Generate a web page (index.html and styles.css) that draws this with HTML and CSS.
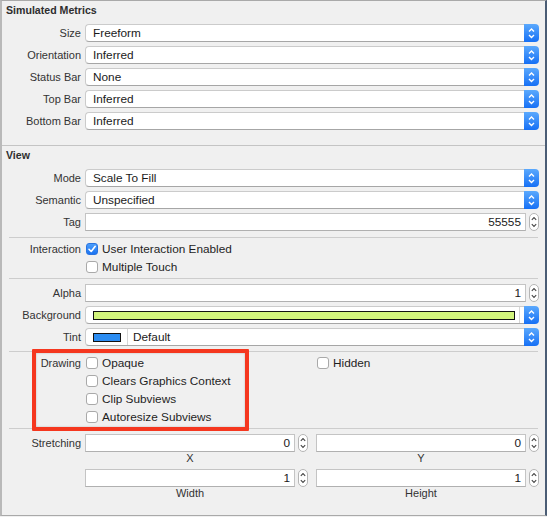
FILE: index.html
```html
<!DOCTYPE html>
<html>
<head>
<meta charset="utf-8">
<link rel="stylesheet" href="styles.css">
</head>
<body>
<div class="panel">
  <section class="sec">
    <div class="sec-title">Simulated Metrics</div>
    <div class="rows">
      <div class="row"><span class="lbl">Size</span><div class="popup"><span class="val">Freeform</span><span class="arrow"><svg viewBox="0 0 15 18" width="15" height="18"><path d="M5 7.5 L7.5 5 L10 7.5 M5 11 L7.5 13.5 L10 11" fill="none" stroke="#fff" stroke-width="1.4"/></svg></span></div></div>
      <div class="row"><span class="lbl">Orientation</span><div class="popup"><span class="val">Inferred</span><span class="arrow"><svg viewBox="0 0 15 18" width="15" height="18"><path d="M5 7.5 L7.5 5 L10 7.5 M5 11 L7.5 13.5 L10 11" fill="none" stroke="#fff" stroke-width="1.4"/></svg></span></div></div>
      <div class="row"><span class="lbl">Status Bar</span><div class="popup"><span class="val">None</span><span class="arrow"><svg viewBox="0 0 15 18" width="15" height="18"><path d="M5 7.5 L7.5 5 L10 7.5 M5 11 L7.5 13.5 L10 11" fill="none" stroke="#fff" stroke-width="1.4"/></svg></span></div></div>
      <div class="row"><span class="lbl">Top Bar</span><div class="popup"><span class="val">Inferred</span><span class="arrow"><svg viewBox="0 0 15 18" width="15" height="18"><path d="M5 7.5 L7.5 5 L10 7.5 M5 11 L7.5 13.5 L10 11" fill="none" stroke="#fff" stroke-width="1.4"/></svg></span></div></div>
      <div class="row"><span class="lbl">Bottom Bar</span><div class="popup"><span class="val">Inferred</span><span class="arrow"><svg viewBox="0 0 15 18" width="15" height="18"><path d="M5 7.5 L7.5 5 L10 7.5 M5 11 L7.5 13.5 L10 11" fill="none" stroke="#fff" stroke-width="1.4"/></svg></span></div></div>
    </div>
  </section>
  <div class="sep-full"></div>
  <section class="sec">
    <div class="sec-title">View</div>
    <div class="rows rows-view">
      <div class="row"><span class="lbl">Mode</span><div class="popup"><span class="val">Scale To Fill</span><span class="arrow"><svg viewBox="0 0 15 18" width="15" height="18"><path d="M5 7.5 L7.5 5 L10 7.5 M5 11 L7.5 13.5 L10 11" fill="none" stroke="#fff" stroke-width="1.4"/></svg></span></div></div>
      <div class="row"><span class="lbl">Semantic</span><div class="popup"><span class="val">Unspecified</span><span class="arrow"><svg viewBox="0 0 15 18" width="15" height="18"><path d="M5 7.5 L7.5 5 L10 7.5 M5 11 L7.5 13.5 L10 11" fill="none" stroke="#fff" stroke-width="1.4"/></svg></span></div></div>
      <div class="row"><span class="lbl">Tag</span><div class="numfield"><span class="field">55555</span><span class="stepper"><svg viewBox="0 0 10 18" width="10" height="18"><path d="M2.8 6.8 L5 4.6 L7.2 6.8 M2.8 11.2 L5 13.4 L7.2 11.2" fill="none" stroke="#444" stroke-width="1.1"/></svg></span></div></div>
    </div>
  </section>
  <div class="sep"></div>
  <section class="group">
    <div class="row"><span class="lbl">Interaction</span><div class="check"><span class="box on"><svg viewBox="0 0 12 12" width="12" height="12"><path d="M3 6.3 L5.2 8.5 L9.2 3.3" fill="none" stroke="#fff" stroke-width="1.6" stroke-linecap="round" stroke-linejoin="round"/></svg></span><span class="ctext">User Interaction Enabled</span></div></div>
    <div class="row"><span class="lbl"></span><div class="check"><span class="box"></span><span class="ctext">Multiple Touch</span></div></div>
  </section>
  <div class="sep"></div>
  <section class="rows rows-pad">
    <div class="row"><span class="lbl">Alpha</span><div class="numfield"><span class="field">1</span><span class="stepper"><svg viewBox="0 0 10 18" width="10" height="18"><path d="M2.8 6.8 L5 4.6 L7.2 6.8 M2.8 11.2 L5 13.4 L7.2 11.2" fill="none" stroke="#444" stroke-width="1.1"/></svg></span></div></div>
    <div class="row"><span class="lbl">Background</span><div class="popup"><span class="val val-bg"><span class="swatch-bg"></span></span><span class="arrow"><svg viewBox="0 0 15 18" width="15" height="18"><path d="M5 7.5 L7.5 5 L10 7.5 M5 11 L7.5 13.5 L10 11" fill="none" stroke="#fff" stroke-width="1.4"/></svg></span></div></div>
    <div class="row"><span class="lbl">Tint</span><div class="popup"><span class="val val-tint"><span class="swatch-tint"></span><span class="tint-name">Default</span></span><span class="arrow"><svg viewBox="0 0 15 18" width="15" height="18"><path d="M5 7.5 L7.5 5 L10 7.5 M5 11 L7.5 13.5 L10 11" fill="none" stroke="#fff" stroke-width="1.4"/></svg></span></div></div>
  </section>
  <div class="sep"></div>
  <section class="group drawing">
    <div class="row"><span class="lbl">Drawing</span><div class="two">
      <div class="check"><span class="box"></span><span class="ctext">Opaque</span></div>
      <div class="check"><span class="box"></span><span class="ctext">Hidden</span></div>
    </div></div>
    <div class="row"><span class="lbl"></span><div class="check"><span class="box"></span><span class="ctext">Clears Graphics Context</span></div></div>
    <div class="row"><span class="lbl"></span><div class="check"><span class="box"></span><span class="ctext">Clip Subviews</span></div></div>
    <div class="row"><span class="lbl"></span><div class="check"><span class="box"></span><span class="ctext">Autoresize Subviews</span></div></div>
    <div class="highlight"></div>
  </section>
  <div class="sep"></div>
  <section class="stretch">
    <div class="srow">
      <span class="lbl">Stretching</span>
      <div class="two">
        <div class="cell"><div class="numfield"><span class="field">0</span><span class="stepper"><svg viewBox="0 0 10 18" width="10" height="18"><path d="M2.8 6.8 L5 4.6 L7.2 6.8 M2.8 11.2 L5 13.4 L7.2 11.2" fill="none" stroke="#444" stroke-width="1.1"/></svg></span></div><div class="sub">X</div></div>
        <div class="cell"><div class="numfield"><span class="field">0</span><span class="stepper"><svg viewBox="0 0 10 18" width="10" height="18"><path d="M2.8 6.8 L5 4.6 L7.2 6.8 M2.8 11.2 L5 13.4 L7.2 11.2" fill="none" stroke="#444" stroke-width="1.1"/></svg></span></div><div class="sub">Y</div></div>
      </div>
    </div>
    <div class="srow">
      <span class="lbl"></span>
      <div class="two">
        <div class="cell"><div class="numfield"><span class="field">1</span><span class="stepper"><svg viewBox="0 0 10 18" width="10" height="18"><path d="M2.8 6.8 L5 4.6 L7.2 6.8 M2.8 11.2 L5 13.4 L7.2 11.2" fill="none" stroke="#444" stroke-width="1.1"/></svg></span></div><div class="sub">Width</div></div>
        <div class="cell"><div class="numfield"><span class="field">1</span><span class="stepper"><svg viewBox="0 0 10 18" width="10" height="18"><path d="M2.8 6.8 L5 4.6 L7.2 6.8 M2.8 11.2 L5 13.4 L7.2 11.2" fill="none" stroke="#444" stroke-width="1.1"/></svg></span></div><div class="sub">Height</div></div>
      </div>
    </div>
  </section>
</div>
</body>
</html>
```
FILE: styles.css
```css
* { box-sizing: border-box; }
html, body { margin: 0; padding: 0; }
body {
  background: #f0f0f0;
  font-family: "Liberation Sans", Arial, sans-serif;
  font-size: 11px;
  color: #333;
}
.panel {
  width: 547px;
  height: 516px;
  background: #f0f0f0;
  border-top: 1px solid #a9a9a9;
  border-left: 2px solid #b9b9b9;
  border-right: 2px solid #4b5d75;
  border-bottom: 1px solid #a9a9a9;
  padding-right: 6px;
}
.sec-title {
  font-weight: bold;
  font-size: 10.6px;
  color: #2e2e2e;
  line-height: 14px;
  padding: 2px 0 0 4px;
  margin-bottom: 7px;
}
.rows { display: flex; flex-direction: column; gap: 4px; }
.sec:first-child .rows { padding-bottom: 15px; }
.rows-view { padding-bottom: 6px; }
.rows-pad { padding: 5px 0; }
.row {
  display: grid;
  grid-template-columns: 79px 1fr;
  column-gap: 4px;
  align-items: center;
  min-height: 18px;
}
.lbl {
  text-align: right;
  color: #333;
  font-size: 11px;
  white-space: nowrap;
}
.sep-full { height: 1px; background: #c4c4c4; margin-right: -6px; }
.sep { height: 1px; background: #cdcdcd; margin: 0 1px 0 7px; }

.popup { display: flex; height: 18px; }
.popup .val {
  flex: 1;
  display: flex;
  align-items: center;
  background: #fff;
  border: 1px solid #cbcbcb;
  border-bottom-color: #a6a6a6;
  border-right: none;
  border-radius: 4px 0 0 4px;
  padding-left: 7px;
  font-size: 11.8px;
  color: #1a1a1a;
}
.popup .arrow {
  width: 15px;
  height: 18px;
  background: linear-gradient(#5ba9fd, #1670f5);
  border-radius: 0 4px 4px 0;
  display: block;
}
.popup .arrow svg { display: block; }

.val-bg { padding-right: 4px; }
.swatch-bg {
  flex: 1;
  height: 9px;
  background: #d2f47c;
  border: 1.5px solid #111;
  margin-right: 4px;
}
.val-bg::after {
  content: "";
  width: 1px;
  align-self: stretch;
  background: #d6d6d6;
}
.swatch-tint {
  width: 28px;
  height: 9px;
  background: #2b8cf2;
  border: 1.5px solid #111;
}
.tint-name {
  margin-left: 6px;
  padding-left: 5px;
  border-left: 1px solid #d6d6d6;
  align-self: stretch;
  display: flex;
  align-items: center;
}

.numfield { display: flex; align-items: center; gap: 3px; height: 18px; }
.numfield .field {
  flex: 1;
  height: 18px;
  background: #fff;
  border: 1px solid #c4c4c4;
  border-bottom-color: #b0b0b0;
  text-align: right;
  padding-right: 4px;
  font-size: 11.8px;
  line-height: 16px;
  color: #1a1a1a;
}
.stepper {
  width: 10px;
  height: 18px;
  background: #fff;
  border: 1px solid #b5b5b5;
  border-radius: 5px;
  overflow: hidden;
}
.stepper svg { display: block; margin: -1px 0 0 -1px; }

.group { padding: 2px 0; }
.group .row { height: 18px; }
.check { display: flex; align-items: center; padding-left: 1px; gap: 4px; }
.box {
  width: 12px;
  height: 12px;
  background: #fff;
  border: 1px solid #a9a9a9;
  border-radius: 3px;
  flex: none;
}
.box.on {
  background: linear-gradient(#4b9dfa, #1c74f2);
  border-color: #2a74e0;
}
.box.on svg { display: block; margin: -1px 0 0 -1px; }
.ctext { font-size: 11.8px; color: #1e1e1e; }

.two {
  display: grid;
  grid-template-columns: 1fr 1fr;
  column-gap: 8px;
}
.drawing { position: relative; }
.highlight {
  position: absolute;
  left: 30px;
  top: -3px;
  width: 217px;
  height: 82px;
  border: 4px solid #f5371f;
  border-radius: 1px;
  box-shadow: inset 0 0 2px rgba(0,0,0,0.25);
  pointer-events: none;
}

.stretch { padding-top: 5px; }
.srow {
  display: grid;
  grid-template-columns: 79px 1fr;
  column-gap: 4px;
  margin-bottom: 5px;
}
.srow .lbl { line-height: 18px; }
.cell { display: flex; flex-direction: column; }
.sub {
  line-height: 12px;
  height: 12px;
  text-align: center;
  padding-right: 13px;
  color: #333;
  font-size: 11px;
}
```
